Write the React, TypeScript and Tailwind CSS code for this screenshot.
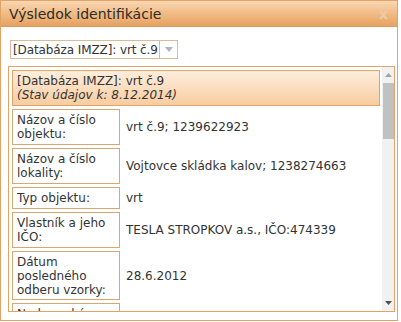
import React from "react";

const rows: { label: React.ReactNode; value: string; h: string }[] = [
  { label: <>Názov a číslo<br />objektu:</>, value: "vrt č.9; 1239622923", h: "h-[36px]" },
  { label: <>Názov a číslo<br />lokality:</>, value: "Vojtovce skládka kalov; 1238274663", h: "h-[36px]" },
  { label: <>Typ objektu:</>, value: "vrt", h: "h-[22px]" },
  { label: <>Vlastník a jeho<br />IČO:</>, value: "TESLA STROPKOV a.s., IČO:474339", h: "h-[36px]" },
  { label: <>Dátum<br />posledného<br />odberu vzorky:</>, value: "28.6.2012", h: "h-[49px]" },
  { label: <>Nadmorská<br />výška:</>, value: "", h: "h-[36px]" },
];

export default function App() {
  return (
    <div
      className="w-[401px] h-[322px] bg-white overflow-hidden text-[#333]"
      style={{ fontFamily: '"DejaVu Sans", Verdana, sans-serif' }}
    >
      <div className="w-[398px] h-[321px] border border-[#e3a366] flex flex-col">
        <div className="h-[26px] shrink-0 flex items-center justify-between pl-[8px] pr-[9px] bg-gradient-to-b from-[#f9d6b2] via-[#f1bb85] to-[#e6a261] border-b border-[#dc9a5c]">
          <span className="text-[14px] leading-none text-[#2b2b2b]">Výsledok identifikácie</span>
          <span className="text-[14px] font-bold leading-none text-[#edcba4]">x</span>
        </div>
        <div className="flex-1 flex flex-col">
          <div className="mt-[13px] ml-[9px] w-[168px] h-[19px] border border-[#d8bc98] flex">
            <div className="flex-1 flex items-center pl-[2px] text-[12px] leading-none whitespace-nowrap tracking-[-0.1px]">
              [Databáza IMZZ]: vrt č.9
            </div>
            <div className="w-[18px] border-l border-[#d8bc98] flex items-center justify-center">
              <svg width="8" height="5" viewBox="0 0 8 5">
                <path d="M0 0 L8 0 L4 5 Z" fill="#a9b4c6" />
              </svg>
            </div>
          </div>
          <div className="mt-[7px] ml-[7px] w-[387px] h-[246px] border border-[#e3a366] flex">
            <div className="flex-1 overflow-hidden pt-[3px] pl-[3px] pr-[2px] flex flex-col gap-[3px] text-[12px] leading-[14px]">
              <div className="shrink-0 h-[36px] border border-[#e3a366] bg-gradient-to-b from-[#fdeedd] to-[#f8cca0] px-[4px] py-[3px]">
                <div>[Databáza IMZZ]: vrt č.9</div>
                <div className="italic">(Stav údajov k: 8.12.2014)</div>
              </div>
              {rows.map((r, i) => (
                <div key={i} className={`shrink-0 flex gap-[3px] ${r.h}`}>
                  <div className="w-[108px] shrink-0 border border-[#d7a874] px-[4px] flex items-center">
                    <div>{r.label}</div>
                  </div>
                  <div className="flex-1 flex items-center px-[3px] whitespace-nowrap">{r.value}</div>
                </div>
              ))}
            </div>
            <div className="w-[12px] shrink-0 bg-[#f1f1f1] flex flex-col items-center">
              <div className="h-[16px] w-full flex items-center justify-center">
                <svg width="7" height="4" viewBox="0 0 7 4">
                  <path d="M0 4 L7 4 L3.5 0 Z" fill="#a3a3a3" />
                </svg>
              </div>
              <div className="w-[11px] h-[56px] bg-[#c1c1c1]" />
              <div className="flex-1" />
              <div className="h-[16px] w-full flex items-center justify-center">
                <svg width="7" height="4" viewBox="0 0 7 4">
                  <path d="M0 0 L7 0 L3.5 4 Z" fill="#505050" />
                </svg>
              </div>
            </div>
          </div>
        </div>
      </div>
    </div>
  );
}
